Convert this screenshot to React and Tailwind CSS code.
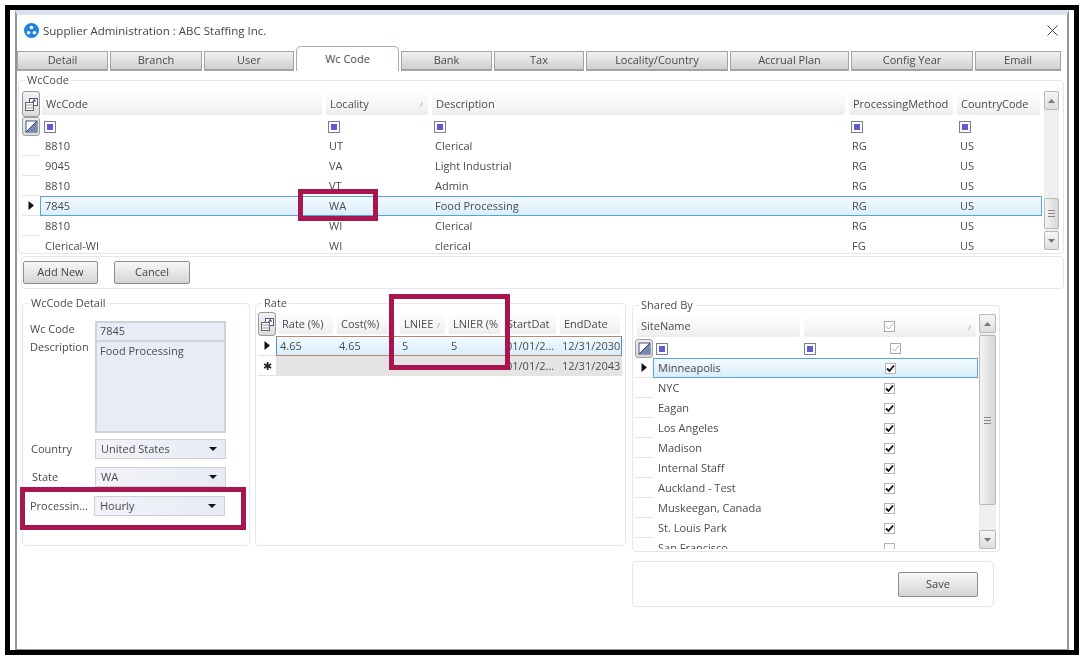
const tabs = [
  ["Detail", "w-[91px]"],
  ["Branch", "w-[92px]"],
  ["User", "w-[90px]"],
  ["Wc Code", "w-[103px]"],
  ["Bank", "w-[91px]"],
  ["Tax", "w-[90px]"],
  ["Locality/Country", "w-[142px]"],
  ["Accrual Plan", "w-[119px]"],
  ["Config Year", "w-[122px]"],
  ["Email", "w-[86px]"],
];

const wcRows = [
  ["8810", "UT", "Clerical", "RG", "US"],
  ["9045", "VA", "Light Industrial", "RG", "US"],
  ["8810", "VT", "Admin", "RG", "US"],
  ["7845", "WA", "Food Processing", "RG", "US"],
  ["8810", "WI", "Clerical", "RG", "US"],
  ["Clerical-WI", "WI", "clerical", "FG", "US"],
];

const sites = [
  "Minneapolis",
  "NYC",
  "Eagan",
  "Los Angeles",
  "Madison",
  "Internal Staff",
  "Auckland - Test",
  "Muskeegan, Canada",
  "St. Louis Park",
  "San Francisco",
];

function HeaderCell({ children, sort, className = "" }) {
  return (
    <div className={`h-full p-[2px] ${className}`}>
      <div className="relative flex h-full items-center overflow-hidden whitespace-nowrap rounded-[2px] bg-gradient-to-b from-[#fdfdfd] via-[#f7f7f7] to-[#ebedf0] pl-[4px]">
        {children}
        {sort && <span className="absolute right-[5px] top-[5px] text-[8px] text-[#999]">/</span>}
      </div>
    </div>
  );
}

function FilterBox() {
  return (
    <span className="flex h-[12px] w-[12px] items-center justify-center border border-[#7a7ba3] bg-white">
      <span className="h-[6px] w-[6px] bg-[#5f5bd2]" />
    </span>
  );
}

function CheckBox({ checked, muted }) {
  return (
    <span className={`flex h-[11px] w-[11px] items-center justify-center border bg-white ${muted ? "border-[#a9a9a9]" : "border-[#b5b5b5]"}`}>
      {checked && (
        <svg width="9" height="9" viewBox="0 0 9 9">
          <path d="M1 4.5 L3.5 7 L8 1.5" fill="none" stroke={muted ? "#b0b0b0" : "#111"} strokeWidth={muted ? 1 : 1.8} />
        </svg>
      )}
    </span>
  );
}

function ColumnChooser() {
  return (
    <div className="flex h-full w-full items-center justify-center rounded-[3px] border border-[#9a9a9a] bg-gradient-to-b from-[#f2f2f2] to-[#dcdcdc]">
      <svg width="15" height="15" viewBox="0 0 15 15">
        <rect x="5.5" y="1.5" width="8" height="7" fill="#fff" stroke="#4a5a8a" />
        <path d="M8 5 L11 3 M11 3H9 M11 3V5" stroke="#33415f" />
        <rect x="1.5" y="5.5" width="8" height="8" fill="#fff" stroke="#666" />
        <path d="M1.5 8H9.5M1.5 11H9.5" stroke="#999" />
      </svg>
    </div>
  );
}

function FilterClear() {
  return (
    <div className="flex h-full w-full items-center justify-center rounded-[3px] border border-[#a0a0a0] bg-gradient-to-b from-[#ededed] to-[#d9d9d9]">
      <svg width="13" height="13" viewBox="0 0 13 13">
        <rect x="1" y="1" width="11" height="11" fill="#fff" stroke="#44547f" />
        <path d="M12 1 L1 12 H12 Z" fill="#7888b4" />
        <path d="M12 1 L1 12" stroke="#33406a" />
      </svg>
    </div>
  );
}

function RowMarker({ active, star }) {
  return (
    <div className="flex h-full items-center justify-center border-b border-[#e3e3e3]">
      {active && (
        <svg width="6" height="9" viewBox="0 0 6 9">
          <path d="M0.5 0 L6 4.5 L0.5 9 Z" fill="#111" />
        </svg>
      )}
      {star && <span className="text-[11px] leading-none text-[#222]">✱</span>}
    </div>
  );
}

function ScrollButton({ down, className = "" }) {
  return (
    <div className={`flex shrink-0 items-center justify-center rounded-[2px] border border-[#b9b9b9] bg-gradient-to-b from-[#f6f6f6] to-[#dedede] ${className}`}>
      <svg width="7" height="4" viewBox="0 0 7 4">
        <path d={down ? "M0 0H7L3.5 4Z" : "M0 4H7L3.5 0Z"} fill="#777" />
      </svg>
    </div>
  );
}

function Scrollbar({ before, thumb, after, height }) {
  return (
    <div className={`flex shrink-0 flex-col bg-[#efefef] ${height}`}>
      <ScrollButton className="h-[19px]" />
      <div className={before} />
      <div className={`flex shrink-0 items-center justify-center rounded-[2px] border border-[#b9b9b9] bg-gradient-to-r from-[#f4f4f4] to-[#d6d6d6] ${thumb}`}>
        <div className="h-[7px] w-[7px] border-y border-[#888] bg-[linear-gradient(#888_0_0)] bg-[length:100%_1px] bg-center bg-no-repeat" />
      </div>
      <div className={after} />
      <ScrollButton down className="h-[19px]" />
    </div>
  );
}

function Button({ children, className = "" }) {
  return (
    <button className={`rounded-[2px] border border-[#8d8d8d] bg-gradient-to-b from-[#f7f7f7] to-[#d5d5d5] text-[#444] ${className}`}>
      {children}
    </button>
  );
}

function Dropdown({ value, className = "" }) {
  return (
    <div className={`flex items-center justify-between border border-[#ccd0da] bg-gradient-to-r from-[#f2f3f8] to-[#e8ebf5] pl-[5px] pr-[8px] ${className}`}>
      <span>{value}</span>
      <svg width="8" height="4" viewBox="0 0 8 4">
        <path d="M0 0H8L4 4Z" fill="#111" />
      </svg>
    </div>
  );
}

function WcCodeGrid() {
  return (
    <div className="flex">
      <div className="h-[162px] overflow-hidden">
        <div className="grid h-[26px] grid-cols-[18px_284px_106px_417px_108px_87px]">
          <ColumnChooser />
          <HeaderCell>WcCode</HeaderCell>
          <HeaderCell sort>Locality</HeaderCell>
          <HeaderCell>Description</HeaderCell>
          <HeaderCell>ProcessingMethod</HeaderCell>
          <HeaderCell>CountryCode</HeaderCell>
        </div>
        <div className="grid h-[19px] grid-cols-[18px_284px_106px_417px_108px_87px] items-center">
          <div className="h-[19px]"><FilterClear /></div>
          {[0, 1, 2, 3, 4].map((i) => (
            <div key={i} className="pl-[4px]"><FilterBox /></div>
          ))}
        </div>
        {wcRows.map((row) => {
          const active = row[1] === "WA";
          return (
            <div key={row[1] + row[0]} className="grid h-[20px] grid-cols-[18px_284px_106px_417px_108px_87px] items-center">
              <RowMarker active={active} />
              <div className={`col-span-5 grid h-full grid-cols-[284px_106px_417px_108px_87px] items-center ${active ? "border border-[#58a3e4] bg-gradient-to-b from-[#f3faff] to-[#d9eefc]" : ""}`}>
                {row.map((cell, i) => (
                  <div key={i} className={`whitespace-nowrap ${active ? "pl-[4px]" : "pl-[5px]"}`}>{cell}</div>
                ))}
              </div>
            </div>
          );
        })}
      </div>
      <div className="ml-[2px] w-[15px]">
        <Scrollbar height="h-[159px]" before="h-[88px]" thumb="h-[31px]" after="h-[2px]" />
      </div>
    </div>
  );
}

function WcCodeDetail() {
  return (
    <fieldset className="h-[250px] w-[228px] rounded-[4px] border border-[#e2e8ee]">
      <legend className="ml-[6px] px-[2px] leading-[14px]">WcCode Detail</legend>
      <div className="grid grid-cols-[65px_131px] items-start pl-[7px] pt-[11px]">
        <div className="flex h-[17px] items-center">Wc Code</div>
        <div className="flex h-[21px] items-center border-2 border-[#cdd2de] bg-[#e9ecf6] pl-[3px]">7845</div>
        <div className="flex h-[10px] items-center">Description</div>
        <div className="h-[91px] border-2 border-t-0 border-[#cdd2de] bg-[#e9ecf6] pl-[3px] pt-[1px]">Food Processing</div>
        <div className="mt-[6px] flex h-[20px] items-center pl-[1px]">Country</div>
        <Dropdown value="United States" className="mt-[6px] h-[20px]" />
        <div className="mt-[8px] flex h-[20px] items-center pl-[2px]">State</div>
        <Dropdown value="WA" className="mt-[8px] h-[20px]" />
        <div className="mt-[9px] flex h-[20px] items-center whitespace-nowrap">Processin...</div>
        <Dropdown value="Hourly" className="mt-[9px] h-[20px] -translate-x-px" />
      </div>
    </fieldset>
  );
}

function RateGrid() {
  const cols = "grid-cols-[18px_59px_63px_49px_55px_56px_64px]";
  return (
    <fieldset className="ml-[5px] h-[250px] w-[371px] rounded-[4px] border border-[#e2e8ee]">
      <legend className="ml-[6px] px-[2px] leading-[14px]">Rate</legend>
      <div className="pl-[2px] pt-[2px]">
        <div className={`grid h-[24px] ${cols}`}>
          <ColumnChooser />
          <HeaderCell>Rate (%)</HeaderCell>
          <HeaderCell>Cost(%)</HeaderCell>
          <HeaderCell sort>LNIEE</HeaderCell>
          <HeaderCell>LNIER (%</HeaderCell>
          <HeaderCell className="[&>div]:pl-[3px]">StartDat</HeaderCell>
          <HeaderCell>EndDate</HeaderCell>
        </div>
        <div className={`grid h-[20px] ${cols} items-center`}>
          <RowMarker active />
          <div className="col-span-6 grid h-full grid-cols-[59px_63px_49px_55px_56px_64px] items-center border border-[#b58a6a] border-x-[#5b8fc9] bg-gradient-to-b from-[#f3faff] to-[#d9eefc]">
            {["4.65", "4.65", "5", "5", "01/01/2...", "12/31/2030"].map((c, i) => (
              <div key={i} className="whitespace-nowrap pl-[3px]">{c}</div>
            ))}
          </div>
        </div>
        <div className={`grid h-[20px] ${cols} items-center`}>
          <RowMarker star />
          <div className="col-span-6 grid h-full grid-cols-[59px_63px_49px_55px_56px_64px] items-center bg-[#e4e4e4]">
            {["", "", "", "", "01/01/2...", "12/31/2043"].map((c, i) => (
              <div key={i} className="whitespace-nowrap pl-[4px]">{c}</div>
            ))}
          </div>
        </div>
      </div>
    </fieldset>
  );
}

function SharedBy() {
  return (
    <div className="ml-[6px] flex w-[368px] flex-col">
      <fieldset className="mt-[2px] h-[254px] rounded-[4px] border border-[#e2e8ee]">
        <legend className="ml-[6px] px-[2px] leading-[14px]">Shared By</legend>
        <div className="flex pl-[2px] pt-[2px]">
          <div className="h-[235px] w-[343px] overflow-hidden">
            <div className="grid h-[25px] grid-cols-[167px_176px]">
              <HeaderCell>SiteName</HeaderCell>
              <HeaderCell sort>
                <span className="flex flex-1 justify-center pr-[6px]"><CheckBox checked muted /></span>
              </HeaderCell>
            </div>
            <div className="grid h-[19px] grid-cols-[18px_149px_176px] items-center">
              <div className="h-[19px]"><FilterClear /></div>
              <div className="pl-[3px]"><FilterBox /></div>
              <div className="flex items-center pl-[2px]">
                <FilterBox />
                <span className="ml-[74px]"><CheckBox checked muted /></span>
              </div>
            </div>
            {sites.map((site, i) => (
              <div key={site} className="grid h-[20px] grid-cols-[18px_325px] items-center">
                <RowMarker active={i === 0} />
                <div className={`grid h-full grid-cols-[149px_176px] items-center ${i === 0 ? "border border-[#58a3e4] bg-gradient-to-b from-[#f3faff] to-[#d9eefc]" : ""}`}>
                  <div className={`whitespace-nowrap ${i === 0 ? "pl-[4px]" : "pl-[5px]"}`}>{site}</div>
                  <div className="flex justify-center pr-[2px]"><CheckBox checked={i < 9} /></div>
                </div>
              </div>
            ))}
          </div>
          <div className="ml-[1px] w-[17px]">
            <Scrollbar height="h-[235px]" before="h-[2px]" thumb="h-[170px]" after="h-[25px]" />
          </div>
        </div>
      </fieldset>
      <div className="mt-[9px] flex h-[46px] w-[362px] items-center justify-end rounded-[4px] border border-[#e2e8ee] pr-[15px]">
        <Button className="h-[25px] w-[80px]">Save</Button>
      </div>
    </div>
  );
}

export default function App() {
  return (
    <div className="relative h-[657px] w-[1081px] overflow-hidden bg-white pb-[2px] pl-[5px] pr-[2px] pt-[5px] font-['Open_Sans',sans-serif] text-[11px] text-[#4b4b4b]">
      <div className="h-full border-[5px] border-black bg-white">
        <div className="ml-[5px] mr-[5px] flex h-full flex-col border-x-2 border-b border-t-[5px] border-x-[#8f979e] border-b-[#8f979e] border-t-[#d9e1ec] blur-[0.35px]">
          <div className="flex h-[31px] items-center justify-between pl-[7px] pr-[9px]">
            <div className="flex items-center">
              <svg width="15" height="15" viewBox="0 0 15 15">
                <circle cx="7.5" cy="7.5" r="7.5" fill="#1f83dd" />
                <circle cx="7.5" cy="4.5" r="1.8" fill="#fff" />
                <circle cx="4.6" cy="9.8" r="1.8" fill="#fff" />
                <circle cx="10.4" cy="9.8" r="1.8" fill="#fff" />
              </svg>
              <span className="ml-[4px] text-[11.5px] text-[#444]">Supplier Administration : ABC Staffing Inc.</span>
            </div>
            <svg width="11" height="11" viewBox="0 0 11 11">
              <path d="M0.5 0.5 L10.5 10.5 M10.5 0.5 L0.5 10.5" stroke="#444" strokeWidth="1" />
            </svg>
          </div>

          <div className="flex h-[25px] items-end gap-[2px]">
            {tabs.map(([name, width]) =>
              name === "Wc Code" ? (
                <div key={name} className={`z-10 flex h-[25px] items-center justify-center rounded-t-[5px] border-x border-t border-[#a8adb3] bg-white ${width}`}>
                  {name}
                </div>
              ) : (
                <div key={name} className={`flex h-[20px] items-center justify-center border border-b-2 border-[#a3a3a3] bg-gradient-to-b from-[#f2f2f2] to-[#cfcfcf] ${width}`}>
                  {name}
                </div>
              )
            )}
          </div>

          <div className="px-[1px] pt-[2px]">
            <fieldset className="h-[181px] w-[1046px] rounded-[4px] border border-[#e2e8ee]">
              <legend className="ml-[6px] px-[2px] leading-[14px]">WcCode</legend>
              <div className="pl-[3px] pt-[4px]">
                <WcCodeGrid />
              </div>
            </fieldset>

            <div className="ml-[3px] mt-[2px] flex h-[33px] w-[1043px] items-center rounded-[4px] border border-[#e2e8ee] pl-[1px]">
              <Button className="h-[23px] w-[75px]">Add New</Button>
              <Button className="ml-[16px] h-[23px] w-[76px]">Cancel</Button>
            </div>

            <div className="ml-[4px] mt-[7px] flex items-start">
              <WcCodeDetail />
              <RateGrid />
              <SharedBy />
            </div>
          </div>
        </div>
      </div>

      <div className="absolute left-[298px] top-[189px] h-[32px] w-[80px] border-[5px] border-[#a9154f]" />
      <div className="absolute left-[389px] top-[294px] h-[76px] w-[121px] border-[5px] border-[#a9154f]" />
      <div className="absolute left-[20px] top-[487px] h-[43px] w-[226px] border-[5px] border-[#a9154f]" />
    </div>
  );
}
